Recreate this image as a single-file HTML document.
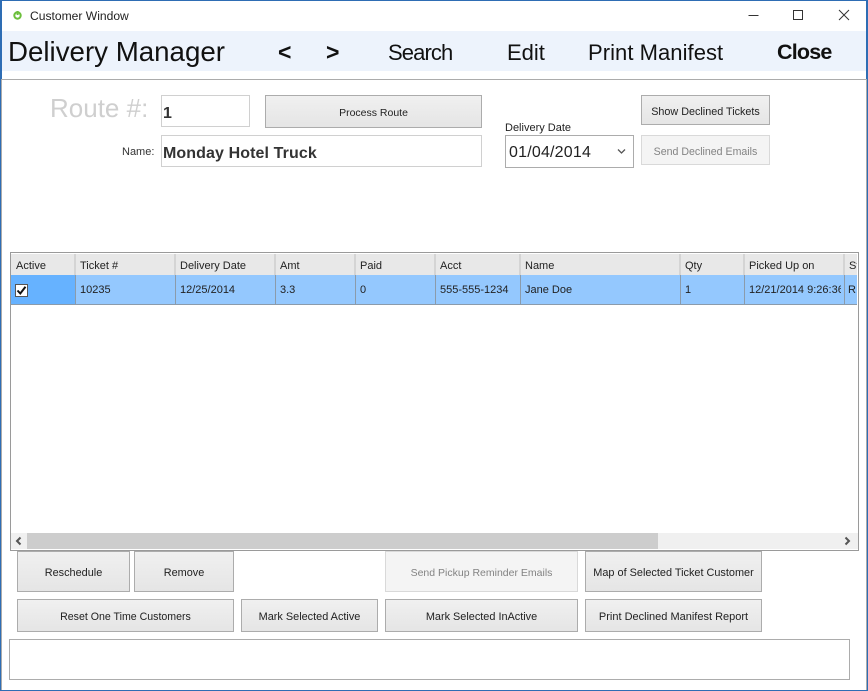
<!DOCTYPE html>
<html><head><meta charset="utf-8">
<style>
html,body{margin:0;padding:0}
body{width:868px;height:691px;position:relative;overflow:hidden;background:#fff;font-family:"Liberation Sans",sans-serif;color:#222}
div{position:absolute;box-sizing:border-box;white-space:nowrap}
.t{line-height:1}
.btn{background:linear-gradient(#f0f0f0,#e5e5e5);border:1px solid #acacac;font-size:10.9px;display:flex;align-items:center;justify-content:center;color:#222;padding-top:2px}
.dis{background:#f4f4f4;border:1px solid #d9d9d9;color:#838383}
.nav{top:42px;font-size:22px;color:#111;line-height:1}
.hd{top:254px;height:21px;background:#e8e8e8;border-right:2px solid #d4d4d4;font-size:11px;line-height:24px;padding-left:5px;overflow:hidden}
.cl{top:275px;height:30px;background:#94c8fe;border-right:1px solid #8b9bab;border-bottom:1px solid #8b9bab;font-size:11px;line-height:31px;padding-left:5px;overflow:hidden}
</style></head><body>
<div style="left:0;top:0;width:868px;height:691px;border:1px solid #2e6db4;border-left-width:2px;border-right-width:2px"></div>
<svg style="position:absolute;left:12px;top:10px" width="11" height="11" viewBox="0 0 11 11"><circle cx="5.5" cy="5.5" r="3.2" fill="none" stroke="#6cbf3c" stroke-width="2"/><rect x="4.6" y="1" width="2" height="4" fill="#6cbf3c"/></svg>
<div class="t" style="left:30px;top:10px;font-size:12.100px;color:#222">Customer Window</div>
<svg style="position:absolute;left:740px;top:6px" width="120" height="20" viewBox="0 0 120 20"><path d="M8.500 9.500H18.500" stroke="#333" fill="none"/><rect x="53.500" y="4.500" width="9" height="9" fill="none" stroke="#333"/><path d="M99 4L109 14M109 4L99 14" stroke="#333" fill="none"/></svg>

<div style="left:2px;top:31px;width:864px;height:40px;background:#edf3fc"></div>
<div class="t" style="left:8px;top:38px;font-size:27.7px;color:#111">Delivery Manager</div>
<div class="nav" style="left:278px;top:41px;font-size:23px;font-weight:bold">&lt;</div>
<div class="nav" style="left:326px;top:41px;font-size:23px;font-weight:bold">&gt;</div>
<div class="nav" style="left:388px;letter-spacing:-.9px">Search</div>
<div class="nav" style="left:507px">Edit</div>
<div class="nav" style="left:588px;letter-spacing:.05px">Print Manifest</div>
<div class="nav" style="left:777px;font-size:21.500px;letter-spacing:-.8px;font-weight:bold">Close</div>

<div style="left:1px;top:79px;width:866px;height:611px;border:1px solid #ababab;border-bottom:0"></div>

<div class="t" style="left:50px;top:95px;font-size:26px;color:#cfcfcf">Route #:</div>
<div style="left:161px;top:95px;width:89px;height:32px;border:1px solid #d0d0d0"></div>
<div class="t" style="left:163px;top:106px;font-size:16px;font-weight:bold;color:#333">1</div>
<div class="t" style="left:122px;top:147px;font-size:11px;color:#333">Name:</div>
<div style="left:161px;top:135px;width:321px;height:32px;border:1px solid #d0d0d0"></div>
<div class="t" style="left:163px;top:146px;font-size:16px;font-weight:bold;color:#333;letter-spacing:.1px">Monday Hotel Truck</div>
<div class="btn" style="left:265px;top:95px;width:217px;height:33px;font-size:10.500px">Process Route</div>
<div class="t" style="left:505px;top:123px;font-size:11px;color:#222">Delivery Date</div>
<div style="left:505px;top:135px;width:129px;height:33px;border:1px solid #acacac"></div>
<div class="t" style="left:509px;top:145px;font-size:16px;color:#222;letter-spacing:.2px">01/04/2014</div>
<svg style="position:absolute;left:617px;top:148px" width="9" height="7" viewBox="0 0 9 7"><path d="M1 1.500L4.500 5L8 1.500" fill="none" stroke="#555" stroke-width="1.300"/></svg>
<div class="btn" style="left:641px;top:95px;width:129px;height:30px;padding-top:4px;font-size:10.800px">Show Declined Tickets</div>
<div class="btn dis" style="left:641px;top:135px;width:129px;height:30px;padding-top:4px;font-size:10.600px">Send Declined Emails</div>

<div style="left:10px;top:252px;width:849px;height:299px;border:1px solid #9a9a9a"></div>
<div class="hd" style="left:11px;width:65px">Active</div>
<div class="hd" style="left:76px;width:100px;padding-left:4px">Ticket #</div>
<div class="hd" style="left:176px;width:100px;padding-left:4px">Delivery Date</div>
<div class="hd" style="left:276px;width:80px;padding-left:4px">Amt</div>
<div class="hd" style="left:356px;width:80px;padding-left:4px">Paid</div>
<div class="hd" style="left:436px;width:85px;padding-left:4px">Acct</div>
<div class="hd" style="left:521px;width:160px;padding-left:4px">Name</div>
<div class="hd" style="left:681px;width:64px;padding-left:4px">Qty</div>
<div class="hd" style="left:745px;width:100px;padding-left:4px">Picked Up on</div>
<div class="hd" style="left:845px;width:12px;padding-left:4px;border-right:0">St</div>

<div class="cl" style="left:11px;width:65px;background:#66b2ff"></div>
<div style="left:15px;top:284px;width:13px;height:13px;background:#fff;border:1px solid #555"></div>
<svg style="position:absolute;left:16px;top:285px" width="11" height="11" viewBox="0 0 11 11"><path d="M1.500 5.500L4.300 8.500L9.500 1.800" fill="none" stroke="#111" stroke-width="2"/></svg>
<div class="cl" style="left:76px;width:100px;padding-left:4px">10235</div>
<div class="cl" style="left:176px;width:100px;padding-left:4px">12/25/2014</div>
<div class="cl" style="left:276px;width:80px;padding-left:4px">3.3</div>
<div class="cl" style="left:356px;width:80px;padding-left:4px">0</div>
<div class="cl" style="left:436px;width:85px;padding-left:4px">555-555-1234</div>
<div class="cl" style="left:521px;width:160px;padding-left:4px">Jane Doe</div>
<div class="cl" style="left:681px;width:64px;padding-left:4px">1</div>
<div class="cl" style="left:745px;width:100px;padding-left:4px"><span style="display:block;width:92px;overflow:hidden">12/21/2014 9:26:36</span></div>
<div class="cl" style="left:845px;width:12px;padding-left:3px;border-right:0">R</div>

<div style="left:11px;top:533px;width:847px;height:16px;background:#f0f0f0"></div>
<div style="left:27px;top:533px;width:631px;height:16px;background:#cdcdcd"></div>
<svg style="position:absolute;left:14px;top:536px" width="9" height="10" viewBox="0 0 9 10"><path d="M6.500 1.500L3 5L6.500 8.500" fill="none" stroke="#555" stroke-width="2"/></svg>
<svg style="position:absolute;left:843px;top:536px" width="9" height="10" viewBox="0 0 9 10"><path d="M2.500 1.500L6 5L2.500 8.500" fill="none" stroke="#555" stroke-width="2"/></svg>

<div class="btn" style="left:17px;top:551px;width:113px;height:41px">Reschedule</div>
<div class="btn" style="left:134px;top:551px;width:100px;height:41px">Remove</div>
<div class="btn dis" style="left:385px;top:551px;width:193px;height:41px;font-size:10.500px">Send Pickup Reminder Emails</div>
<div class="btn" style="left:585px;top:551px;width:177px;height:41px;font-size:10.900px">Map of Selected Ticket Customer</div>
<div class="btn" style="left:17px;top:599px;width:217px;height:33px;font-size:10.600px">Reset One Time Customers</div>
<div class="btn" style="left:241px;top:599px;width:137px;height:33px">Mark Selected Active</div>
<div class="btn" style="left:385px;top:599px;width:193px;height:33px">Mark Selected InActive</div>
<div class="btn" style="left:585px;top:599px;width:177px;height:33px;font-size:11px">Print Declined Manifest Report</div>
<div style="left:9px;top:639px;width:841px;height:41px;border:1px solid #acacac"></div>
</body></html>
